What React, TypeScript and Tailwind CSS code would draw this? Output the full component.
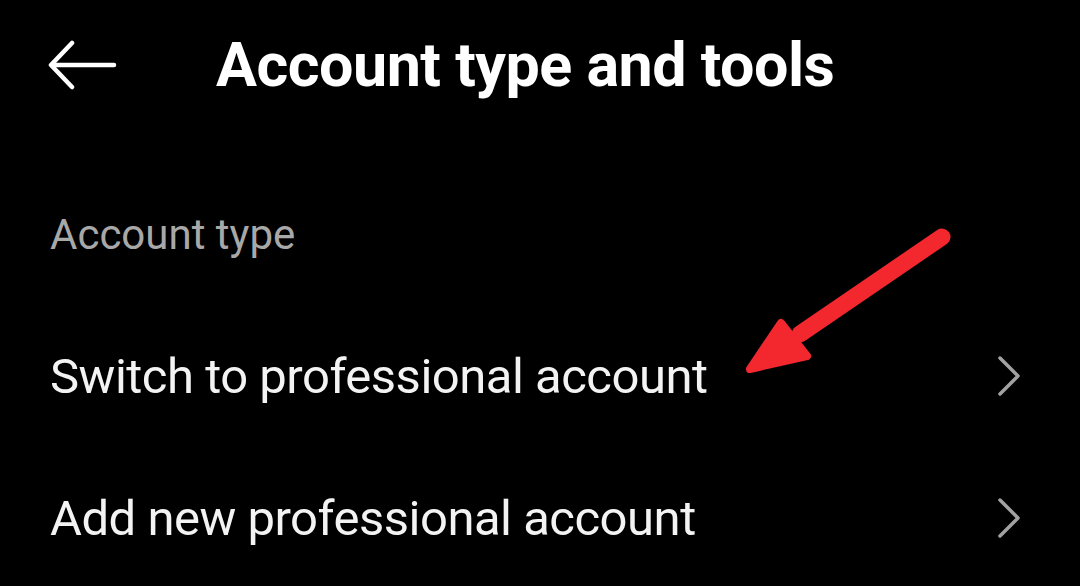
const font = { fontFamily: "Roboto, 'Noto Sans', sans-serif" };

function BackArrow() {
  return (
    <svg viewBox="0 0 70 50" className="h-[50px] w-[70px]" fill="none" stroke="white" strokeWidth="4.5" strokeLinecap="round" strokeLinejoin="round">
      <path d="M4 25h62" />
      <path d="M24 3 3 25l21 22" />
    </svg>
  );
}

function Chevron() {
  return (
    <svg viewBox="0 0 26 42" className="h-[42px] w-[26px]" fill="none" stroke="#a2a2a2" strokeWidth="3.5" strokeLinecap="round" strokeLinejoin="round">
      <path d="M4 3l18 18L4 39" />
    </svg>
  );
}

// red annotation arrow drawn over the list
function RedArrow() {
  return (
    <svg viewBox="0 0 220 155" className="h-[155px] w-[220px]" fill="#f3282f" stroke="#f3282f" strokeLinecap="round" strokeLinejoin="round">
      <path d="M204 13 62 110" fill="none" strokeWidth="17" />
      <path d="M12 145 43 99 69 132Z" strokeWidth="8" />
    </svg>
  );
}

function Row({ label }: { label: string }) {
  return (
    <div className="flex h-[142px] items-center justify-between pl-[50px] pr-[58px]">
      <span className="text-[49px] leading-none tracking-[-0.5px] text-[#f3f3f3]">{label}</span>
      <Chevron />
    </div>
  );
}

export default function App() {
  return (
    <div className="relative h-[586px] w-[1080px] overflow-hidden bg-black" style={font}>
      <header className="flex h-[130px] items-center pl-[48px]">
        <BackArrow />
        <h1 className="ml-[98px] text-[61px] font-bold leading-none tracking-[-0.5px] text-white">Account type and tools</h1>
      </header>
      <div className="mt-[70px] flex h-[70px] items-center pl-[50px]">
        <span className="text-[42px] leading-none text-[#a8a8a8]">Account type</span>
      </div>
      <div className="mt-[35px]">
        <Row label="Switch to professional account" />
        <Row label="Add new professional account" />
      </div>
      <div className="absolute left-[738px] top-[224px]">
        <RedArrow />
      </div>
    </div>
  );
}
